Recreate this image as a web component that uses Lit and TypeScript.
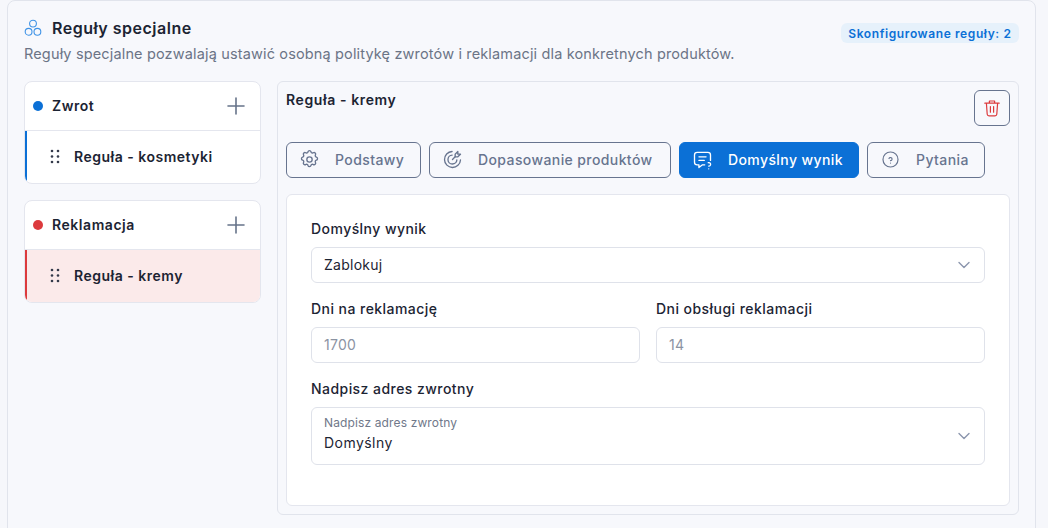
import { LitElement, html, css, svg } from "lit";
import { customElement } from "lit/decorators.js";

const chevron = html`<svg class="chev" width="14" height="14" viewBox="0 0 14 14" fill="none" stroke="#8b96ad" stroke-width="1.4" stroke-linecap="round" stroke-linejoin="round"><path d="M2 4.5 7 9.5 12 4.5"/></svg>`;
const plus = html`<svg width="18" height="18" viewBox="0 0 18 18" fill="none" stroke="#667389" stroke-width="1.6" stroke-linecap="round"><path d="M9 1v16M1 9h16"/></svg>`;
const grip = html`<svg width="10" height="15" viewBox="0 0 10 15" fill="#333a4a"><circle cx="2" cy="2" r="1.3"/><circle cx="8" cy="2" r="1.3"/><circle cx="2" cy="7.5" r="1.3"/><circle cx="8" cy="7.5" r="1.3"/><circle cx="2" cy="13" r="1.3"/><circle cx="8" cy="13" r="1.3"/></svg>`;

const icons = {
  gear: svg`<path d="M10.3 3.3c.4-1.7 2.9-1.7 3.4 0a1.7 1.7 0 0 0 2.6 1.1c1.5-.9 3.3.8 2.4 2.4a1.7 1.7 0 0 0 1 2.5c1.8.5 1.8 3 0 3.5a1.7 1.7 0 0 0-1 2.5c.9 1.5-.9 3.3-2.4 2.4a1.7 1.7 0 0 0-2.6 1c-.4 1.8-2.9 1.8-3.4 0a1.7 1.7 0 0 0-2.6-1c-1.5.9-3.3-.9-2.4-2.4a1.7 1.7 0 0 0-1-2.5c-1.8-.5-1.8-3 0-3.5a1.7 1.7 0 0 0 1-2.5c-.9-1.6.9-3.3 2.4-2.4a1.7 1.7 0 0 0 2.6-1.1Z"/><circle cx="12" cy="12" r="3"/>`,
  target: svg`<path d="M11.6 7.1a5 5 0 1 0 5.3 5.3"/><path d="M11.5 3a9 9 0 1 0 9.5 9.5"/><path d="M15 6v3h3l3-3h-3V3l-3 3Z"/><path d="M15 9l-3 3"/>`,
  message: svg`<path d="M14.5 18H12l-4 3v-3H6a3 3 0 0 1-3-3V7a3 3 0 0 1 3-3h12a3 3 0 0 1 3 3v6"/><path d="M8 9h8M8 13h6"/><path d="M19 22.5v.01M19 19.5a2 2 0 1 0-.5-3.9"/>`,
  question: svg`<circle cx="12" cy="12" r="9.5"/><path d="M12 16.5v.01M12 13.5a2 2 0 1 0-1.9-2.7"/>`,
};

@customElement("app-root")
export class AppRoot extends LitElement {
  static styles = css`
    :host {
      display: block;
      height: 528px;
      overflow: hidden;
      background: #f6f7fb;
      font-family: Inter, "Noto Sans", sans-serif;
      color: #1c2433;
    }
    .section {
      box-sizing: border-box;
      margin-left: 7px;
      width: 1029px;
      height: 540px;
      padding: 0 16px;
      background: #f7f8fc;
      border: 1px solid #e1e4ec;
      border-radius: 8px;
    }
    .head {
      display: flex;
      align-items: center;
      justify-content: space-between;
      height: 40px;
      padding-top: 14px;
      box-sizing: border-box;
    }
    .title {
      display: flex;
      align-items: center;
      gap: 10px;
      font-size: 16px;
      font-weight: 600;
      letter-spacing: 0.5px;
    }
    .badge {
      display: flex;
      align-items: center;
      height: 20px;
      margin-top: 10px;
      padding: 0 7.5px;
      border-radius: 6px;
      background: #e6f1fb;
      color: #0b70d6;
      font-size: 12px;
      font-weight: 600;
      letter-spacing: 0.6px;
    }
    .sub {
      margin: 2px 0 0;
      height: 38px;
      font-size: 14.5px;
      line-height: 22px;
      color: #6b7486;
      letter-spacing: 0.15px;
    }
    .cols {
      display: flex;
      gap: 16px;
      align-items: flex-start;
    }
    .side {
      width: 237px;
      display: flex;
      flex-direction: column;
      gap: 16px;
    }
    .group {
      box-sizing: border-box;
      height: 103px;
      background: #fff;
      border: 1px solid #e4e6ee;
      border-radius: 8px;
      overflow: hidden;
    }
    .group-head {
      box-sizing: border-box;
      height: 49px;
      display: flex;
      align-items: center;
      padding: 0 15px 1px 8px;
      border-bottom: 1px solid #e4e6ee;
      font-size: 14px;
      font-weight: 600;
      letter-spacing: 0.55px;
    }
    .dot {
      width: 10px;
      height: 10px;
      border-radius: 50%;
      margin-right: 9px;
    }
    .dot.blue { background: #0b70d6; }
    .dot.red { background: #dc3a3d; }
    .group-head svg { margin-left: auto; }
    .rule {
      box-sizing: border-box;
      height: 52px;
      display: flex;
      align-items: center;
      gap: 14px;
      padding-left: 23px;
      padding-bottom: 1px;
      font-size: 14px;
      font-weight: 600;
      letter-spacing: 0.5px;
      border-left: 2px solid #0b70d6;
    }
    .rule.red {
      border-left-color: #dc3a3d;
      background: #fbeaea;
    }
    .panel {
      box-sizing: border-box;
      width: 742px;
      height: 434px;
      padding: 8px;
      border: 1px solid #e1e4ec;
      border-radius: 6px;
    }
    .panel-head {
      display: flex;
      justify-content: space-between;
      align-items: flex-start;
      height: 52px;
      font-size: 14px;
      font-weight: 600;
      letter-spacing: 0.6px;
      line-height: 20px;
    }
    .trash {
      box-sizing: border-box;
      width: 36px;
      height: 36px;
      display: flex;
      align-items: center;
      justify-content: center;
      border: 1px solid #67748f;
      border-radius: 6px;
    }
    .tabs {
      display: flex;
      gap: 8px;
    }
    .tab {
      box-sizing: border-box;
      height: 36px;
      display: flex;
      align-items: center;
      gap: 16px;
      padding: 0 0 1px 13px;
      border: 1px solid #67748f;
      border-radius: 6px;
      color: #67748f;
      font-size: 14px;
      font-weight: 500;
      letter-spacing: 0.4px;
      white-space: nowrap;
    }
    .tab svg {
      fill: none;
      stroke: currentColor;
      stroke-width: 1.5;
      stroke-linecap: round;
      stroke-linejoin: round;
      overflow: visible;
    }
    .tab.on {
      background: #0b70d6;
      border-color: #0b70d6;
      color: #fff;
    }
    .form {
      box-sizing: border-box;
      height: 312px;
      margin-top: 16px;
      padding: 25px 24px;
      background: #fff;
      border: 1px solid #e4e6ee;
      border-radius: 6px;
    }
    .label {
      box-sizing: border-box;
      height: 18px;
      padding-bottom: 2px;
      display: flex;
      align-items: center;
      font-size: 14px;
      font-weight: 500;
      letter-spacing: 0.45px;
    }
    .field {
      box-sizing: border-box;
      height: 36px;
      margin-top: 9px;
      display: flex;
      align-items: center;
      justify-content: space-between;
      padding: 0 13px 0 12px;
      border: 1px solid #dfe2ea;
      border-radius: 6px;
      font-size: 14px;
      line-height: 16px;
      letter-spacing: 0.25px;
    }
    .field > span { margin-top: -1px; }
    .field.ph { color: #8b93a3; }
    .field.tall { height: 58px; }
    .stack { display: flex; flex-direction: column; gap: 3px; margin-top: -4px; }
    .small { font-size: 12px; color: #70788a; letter-spacing: 0.13px; line-height: 14px; }
    .val { line-height: 20px; letter-spacing: 0.45px; }
    .row {
      display: grid;
      grid-template-columns: 1fr 1fr;
      gap: 16px;
    }
    .gap { margin-top: 17px; }
  `;

  private tab(icon: unknown, text: string, width: number, on = false, box = "1.3 1.3 21.4 21.4") {
    return html`<div class="tab ${on ? "on" : ""}" style="width:${width}px">
      <svg width="19" height="19" viewBox=${box}>${icon}</svg>${text}
    </div>`;
  }

  render() {
    return html`
      <div class="section">
        <div class="head">
          <div class="title">
            <svg width="18" height="18" viewBox="0 0 18 18" fill="none" stroke="#3f93e6" stroke-width="1.1"><circle cx="9" cy="4.6" r="3.4"/><circle cx="4.6" cy="12.8" r="3.4"/><circle cx="13.4" cy="12.8" r="3.4"/></svg>
            Reguły specjalne
          </div>
          <div class="badge">Skonfigurowane reguły: 2</div>
        </div>
        <p class="sub">Reguły specjalne pozwalają ustawić osobną politykę zwrotów i reklamacji dla konkretnych produktów.</p>
        <div class="cols">
          <div class="side">
            <div class="group">
              <div class="group-head"><span class="dot blue"></span>Zwrot${plus}</div>
              <div class="rule">${grip}Reguła - kosmetyki</div>
            </div>
            <div class="group">
              <div class="group-head"><span class="dot red"></span>Reklamacja${plus}</div>
              <div class="rule red">${grip}Reguła - kremy</div>
            </div>
          </div>
          <div class="panel">
            <div class="panel-head">
              Reguła - kremy
              <div class="trash">
                <svg width="18" height="18" viewBox="0 0 18 18" fill="none" stroke="#dc3a3d" stroke-width="1.2" stroke-linecap="round" stroke-linejoin="round"><path d="M1.8 4.2h14.4M3.4 4.2l.8 11a1.8 1.8 0 0 0 1.8 1.6h6a1.8 1.8 0 0 0 1.8-1.6l.8-11M6.4 4.2V2h5.2v2.2M7.4 7.6v5.6M10.6 7.6v5.6"/></svg>
              </div>
            </div>
            <div class="tabs">
              ${this.tab(icons.gear, "Podstawy", 135)}
              ${this.tab(icons.target, "Dopasowanie produktów", 242)}
              ${this.tab(icons.message, "Domyślny wynik", 180, true)}
              ${this.tab(icons.question, "Pytania", 118, false, "0 0 24 24")}
            </div>
            <div class="form">
              <div class="label">Domyślny wynik</div>
              <div class="field"><span>Zablokuj</span>${chevron}</div>
              <div class="row gap">
                <div>
                  <div class="label">Dni na reklamację</div>
                  <div class="field ph"><span>1700</span></div>
                </div>
                <div>
                  <div class="label">Dni obsługi reklamacji</div>
                  <div class="field ph"><span>14</span></div>
                </div>
              </div>
              <div class="label gap">Nadpisz adres zwrotny</div>
              <div class="field tall">
                <div class="stack">
                  <span class="small">Nadpisz adres zwrotny</span>
                  <span class="val">Domyślny</span>
                </div>
                ${chevron}
              </div>
            </div>
          </div>
        </div>
      </div>
    `;
  }
}
